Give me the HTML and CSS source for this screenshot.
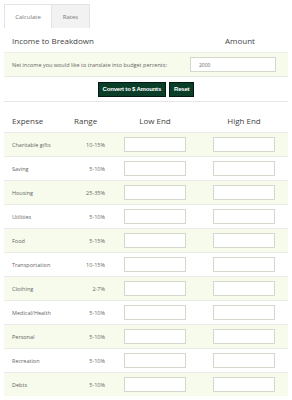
FILE: index.html
```html
<!DOCTYPE html>
<html lang="en">
<head>
    <meta charset="UTF-8">
    <meta name="viewport" content="width=device-width, initial-scale=1.0">
    <title>Budget Calculator</title>
    <link rel="stylesheet" href="styles.css">
</head>
<body>
    <div class="tabs">
        <div class="tab active">Calculate</div>
        <div class="tab">Rates</div>
    </div>

    <div class="income">
        <div class="income-head">
            <div>Income to Breakdown</div>
            <div class="amount-head">Amount</div>
        </div>
        <div class="income-row">
            <div>Net income you would like to translate into budget percents:</div>
            <div class="amount-cell"><input type="text" class="net-input" value="2000"></div>
        </div>
        <div class="button-row">
            <button class="btn">Convert to $ Amounts</button>
            <button class="btn">Reset</button>
        </div>
    </div>

    <div class="budget">
        <div class="budget-head">
            <div class="col-name">Expense</div>
            <div class="col-range-head">Range</div>
            <div class="col-mid">Low End</div>
            <div class="col-mid">High End</div>
        </div>
        <div id="rows"></div>
    </div>

    <script>
        // Expense categories with suggested percent ranges
        const expenses = [
            ["Charitable gifts", "10-15%"],
            ["Saving", "5-10%"],
            ["Housing", "25-35%"],
            ["Utilities", "5-10%"],
            ["Food", "5-15%"],
            ["Transportation", "10-15%"],
            ["Clothing", "2-7%"],
            ["Medical/Health", "5-10%"],
            ["Personal", "5-10%"],
            ["Recreation", "5-10%"],
            ["Debts", "5-10%"]
        ];

        let html = "";
        expenses.forEach(function(item, i) {
            html += '<div class="budget-row' + (i % 2 === 0 ? ' shaded' : '') + '">' +
                '<div class="col-name">' + item[0] + '</div>' +
                '<div class="col-range">' + item[1] + '</div>' +
                '<div class="col-mid"><input type="text" class="cell-input"></div>' +
                '<div class="col-mid"><input type="text" class="cell-input"></div>' +
                '</div>';
        });
        document.getElementById("rows").innerHTML = html;
    </script>
</body>
</html>
```

FILE: styles.css
```css
body {
    margin: 4px;
    font-family: 'Open Sans', sans-serif;
    color: #555;
    background-color: #fff;
}

.tabs {
    display: flex;
    height: 24px;
}

.tab {
    width: 48px;
    box-sizing: border-box;
    border: 1px solid #e4e4e4;
    border-bottom: none;
    font-size: 6px;
    color: #777;
    display: flex;
    align-items: center;
    justify-content: center;
}

.tab + .tab {
    width: 38px;
    border-left: none;
    background-color: #f2f2f2;
}

.income-head {
    display: flex;
    height: 24px;
    align-items: center;
    font-size: 8px;
    color: #444;
    padding-left: 8px;
}

.income-head > div:first-child,
.income-row > div:first-child {
    flex: 1;
}

.amount-head {
    width: 96px;
    text-align: center;
}

.income-row {
    display: flex;
    align-items: center;
    height: 23px;
    padding-left: 8px;
    font-size: 5.5px;
    color: #666;
    background-color: #f6fbec;
    border-top: 1px solid #eef2e6;
    border-bottom: 1px solid #e8ebe2;
}

.amount-cell {
    width: 98px;
}

.net-input {
    width: 86px;
    height: 15px;
    box-sizing: border-box;
    border: 1px solid #d3d8cc;
    font-family: 'Open Sans', sans-serif;
    font-size: 5px;
    color: #666;
    padding: 0 8px;
    margin: 0;
}

.button-row {
    display: flex;
    justify-content: center;
    gap: 3px;
    height: 24px;
    align-items: center;
    border-bottom: 1px solid #e6e6e6;
}

.btn {
    background-color: #0b3e28;
    color: #fff;
    border: 1px solid #021a10;
    font-family: 'Liberation Sans', sans-serif;
    font-weight: bold;
    font-size: 6px;
    letter-spacing: -0.2px;
    height: 15px;
    padding: 0 4px;
    margin: 0;
}

.budget {
    margin-top: 7px;
}

.budget-head,
.budget-row {
    display: grid;
    grid-template-columns: 60px 46px 90px 88px;
    align-items: center;
}

.budget-head {
    height: 23px;
    font-size: 8px;
    color: #444;
}

.budget-head .col-mid {
    text-align: center;
}

.col-name {
    padding-left: 8px;
}

.col-range-head {
    padding-left: 10px;
}

.budget-row {
    height: 23px;
    border-top: 1px solid #eaeaea;
    font-size: 5.5px;
    color: #666;
}

.budget-row.shaded {
    background-color: #f6fbec;
}

.col-range {
    text-align: right;
    padding-right: 5px;
}

.col-mid {
    display: flex;
    justify-content: center;
}

.cell-input {
    width: 62px;
    height: 15px;
    box-sizing: border-box;
    border: 1px solid #d3d8cc;
    margin: 0;
    padding: 0;
    background-color: #fff;
}
```
